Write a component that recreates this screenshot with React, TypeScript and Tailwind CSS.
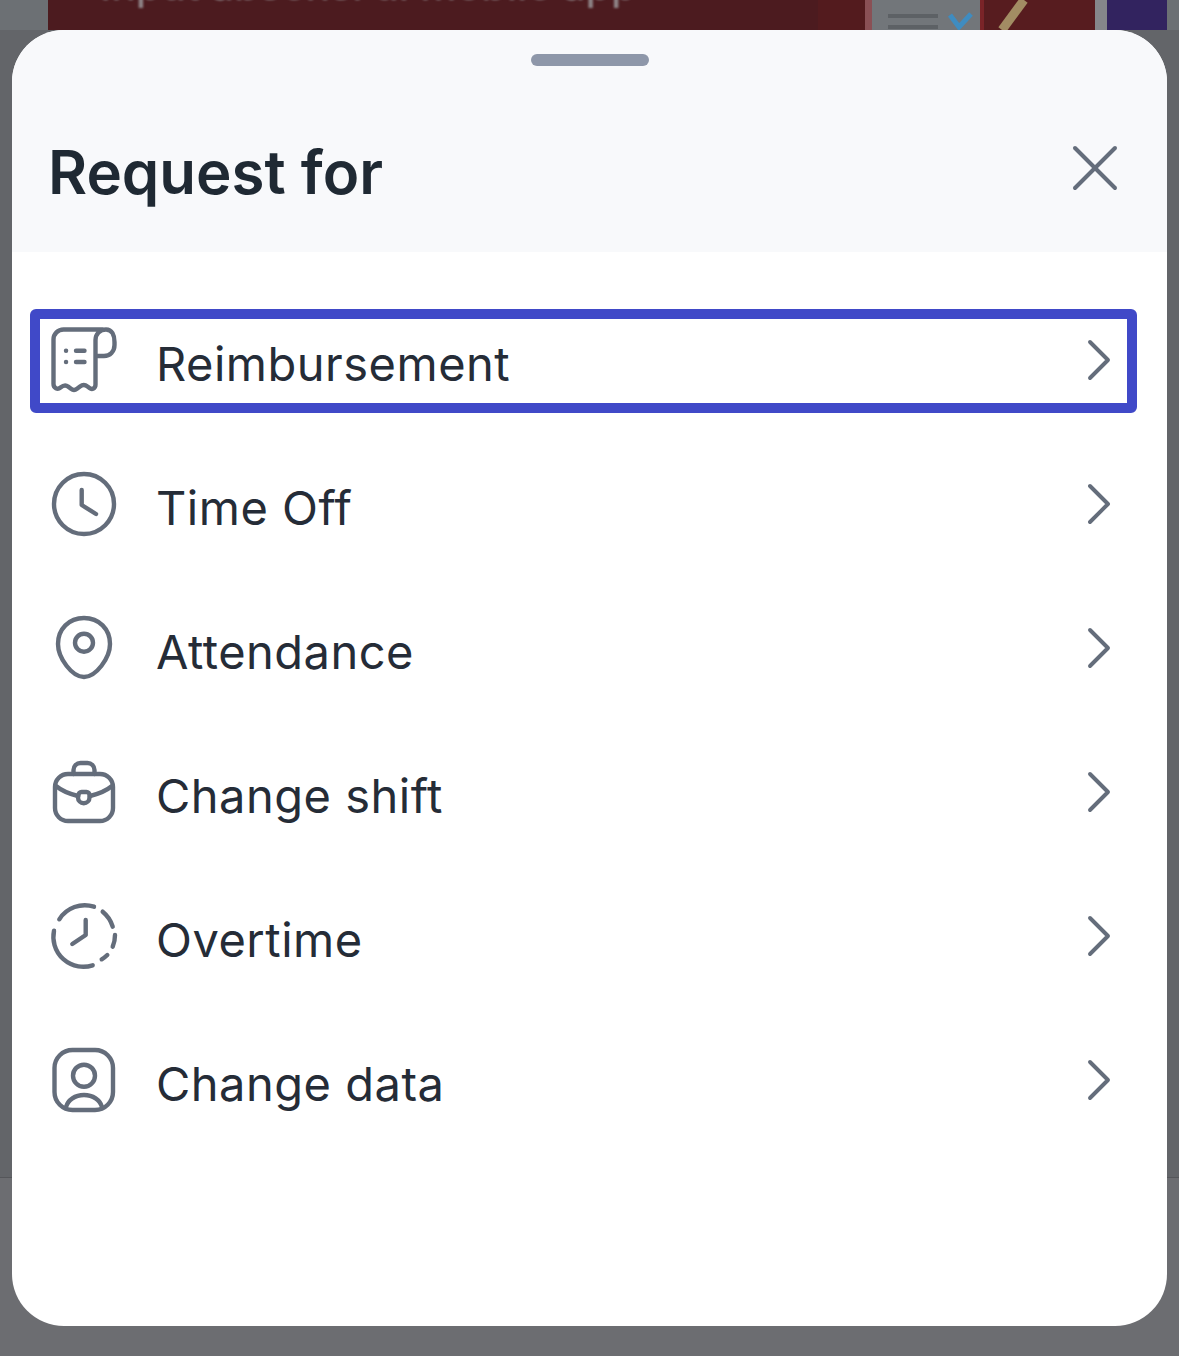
import { ChevronRight, X } from "lucide-react";
import type { ReactNode } from "react";

function Icon({ children }: { children: ReactNode }) {
  return (
    <svg viewBox="0 0 72 72" className="w-[72px] h-[72px] shrink-0" fill="none" stroke="#646d7b" strokeWidth="4.4" strokeLinecap="round" strokeLinejoin="round">
      {children}
    </svg>
  );
}

const rows = [
  {
    label: "Reimbursement",
    icon: (
      <Icon>
        <path d="M55 5.500H15.500a10 10 0 0 0-10 10V60c0 4 4 6 7 3.500 2.500-2 5-3 7.500-1l3 2.300c2 1.500 4 1.500 6 0l3-2.300c2.500-2 5-2 7.500 0l2 1.500c2.500 2 6 .5 6-3.500V16c0-6 4.500-10.500 10.500-10.500S66.500 11 66.500 18v3c0 6.500-4.500 11-10.500 11H49" />
        <path d="M18 26.700h.1M18 38h.1M28 26.700h8.500M28 38h8.500" />
      </Icon>
    ),
  },
  {
    label: "Time Off",
    icon: (
      <Icon>
        <circle cx="36" cy="36" r="30" />
        <path d="M33.700 22v15L48 46" />
      </Icon>
    ),
  },
  {
    label: "Attendance",
    icon: (
      <Icon>
        <path d="M36 6C21 6 10 17 10 32 10 46 24 65 36 65s26-19 26-33C62 17 51 6 36 6Z" />
        <circle cx="36" cy="30.700" r="9" />
      </Icon>
    ),
  },
  {
    label: "Change shift",
    icon: (
      <Icon>
        <rect x="7" y="18" width="58" height="47" rx="13" />
        <path d="M25.500 18v-4a7 7 0 0 1 7-7h7a7 7 0 0 1 7 7v4" />
        <path d="M8 30c6 5 14 8 22 10M64 30c-6 5-14 8-22 10" />
        <path d="M30.500 39a3 3 0 0 1 3-3h5a3 3 0 0 1 3 3v2.500a5.750 5.750 0 0 1-11.500 0Z" />
      </Icon>
    ),
  },
  {
    label: "Overtime",
    icon: (
      <Icon>
        <path d="M11.300 19.300A30 30 0 0 1 46 6.700M54.700 11.700A30 30 0 0 1 64.700 26.700M67 35A30 30 0 0 1 64.700 46.700M59.300 55A30 30 0 0 1 53.700 59.300M44.700 65.300A30 30 0 0 1 6 30.700" />
        <path d="M37.700 20v15L24.300 44" />
      </Icon>
    ),
  },
  {
    label: "Change data",
    icon: (
      <Icon>
        <rect x="6.500" y="6" width="58.500" height="60" rx="18" />
        <circle cx="36" cy="31.700" r="11" />
        <path d="M18 63c2-7 9-12 18-12s16 5 18 12" />
      </Icon>
    ),
  },
];

export default function App() {
  return (
    <div className="relative w-[1179px] h-[1356px] overflow-hidden bg-[#6c6d71] font-['Inter',sans-serif]">
      {/* dimmed page behind the sheet */}
      <div className="h-[1178px] bg-[#636569] border-b border-[#55565a]">
        <div className="flex h-[30px] bg-[#6c7074] pl-[48px]">
          <div className="w-[1047px] bg-[#4c1b1f] relative overflow-hidden">
            <p className="absolute left-[52px] bottom-[20px] whitespace-nowrap text-[41px] leading-[50px] font-medium text-[#8e8487] blur-[1px]">Input absensi di mobile app</p>
            {/* banner illustration */}
            <svg viewBox="0 0 1047 30" className="absolute inset-0 w-[1047px] h-[30px]">
              <rect x="770" width="47" height="30" fill="#531b1e" />
              <rect x="817" width="7" height="30" fill="#8a5055" />
              <rect x="824" width="108" height="30" fill="#72767a" />
              <path d="M840 16h50M840 27h50" stroke="#5d6165" strokeWidth="4" />
              <path d="M902 15l9 12 12-13" fill="none" stroke="#3f8cc0" strokeWidth="5" />
              <rect x="932" width="115" height="30" fill="#571c1f" />
              <rect x="932" width="4" height="30" fill="#7a2428" />
              <path d="M976 0l-22 30" stroke="#a28c63" strokeWidth="9" />
            </svg>
          </div>
          <div className="w-[12px] bg-[#85868a]" />
          <div className="w-[60px] bg-[#32235f]" />
        </div>
      </div>

      {/* bottom sheet */}
      <div className="absolute left-[12px] top-[30px] w-[1155px] h-[1296px] bg-white rounded-[52px] overflow-hidden">
        <div className="h-[222px] bg-[#f8f9fb] relative">
          <div className="absolute left-[519px] top-[24px] w-[118px] h-[12px] rounded-full bg-[#8e97a9]" />
          <div className="flex items-center justify-between pl-[36px] pr-[32px] pt-[107px]">
            <h2 className="text-[60px] leading-[70px] font-semibold text-[#1f2933]">Request for</h2>
            <X className="w-[80px] h-[80px] text-[#646d7b] -my-[5px] -translate-y-[4px]" strokeWidth={1.2} />
          </div>
        </div>

        <ul className="pt-[36px]">
          {rows.map((row) => (
            <li key={row.label} className="h-[144px] flex items-center pl-[36px] pr-[32px]">
              {row.icon}
              <span className="ml-[36px] flex-1 text-[47px] leading-[56px] pt-[7px] tracking-[0.5px] text-[#252c37]">{row.label}</span>
              <ChevronRight className="w-[72px] h-[72px] text-[#646d7b]" strokeWidth={1.3} />
            </li>
          ))}
        </ul>
      </div>

      {/* highlight annotation */}
      <div className="absolute left-[30px] top-[309px] w-[1107px] h-[104px] border-[10px] border-[#4049c8] rounded-[6px]" />
    </div>
  );
}
